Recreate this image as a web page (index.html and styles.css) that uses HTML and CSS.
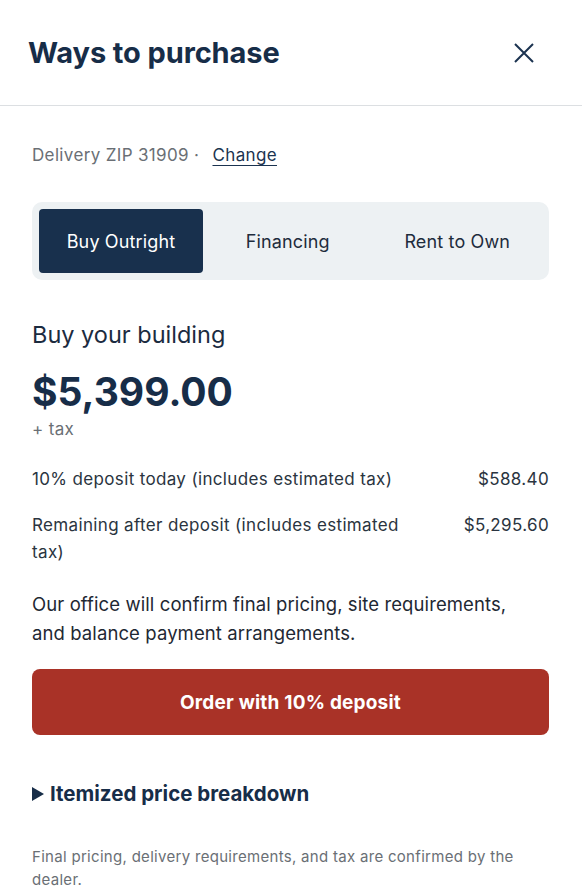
FILE: index.html
```html
<!DOCTYPE html>
<html lang="en">

<head>
    <meta charset="UTF-8">
    <meta name="viewport" content="width=device-width, initial-scale=1.0">
    <title>Ways to purchase</title>
    <link rel="stylesheet" href="styles.css">
</head>

<body>
    <div class="panel">
        <header class="panelHead">
            <h1>Ways to purchase</h1>
            <button class="closeBtn" type="button" aria-label="Close">
                <svg width="22" height="22" viewBox="0 0 22 22">
                    <path d="M2 2 L20 20 M20 2 L2 20" stroke="#1b3350" stroke-width="2" fill="none" />
                </svg>
            </button>
        </header>

        <main class="panelBody">
            <p class="zip">Delivery ZIP 31909 · <a href="#">Change</a></p>

            <ul class="tabs">
                <li class="active">Buy Outright</li>
                <li>Financing</li>
                <li>Rent to Own</li>
            </ul>

            <h2 class="subTitle">Buy your building</h2>
            <div class="price">$5,399.00</div>
            <div class="tax">+ tax</div>

            <div class="row">
                <span>10% deposit today (includes estimated tax)</span>
                <span>$588.40</span>
            </div>
            <div class="row">
                <span>Remaining after deposit (includes estimated tax)</span>
                <span>$5,295.60</span>
            </div>

            <p class="note">Our office will confirm final pricing, site requirements, and balance payment arrangements.</p>

            <button class="orderBtn" type="button">Order with 10% deposit</button>

            <details class="breakdown">
                <summary>Itemized price breakdown</summary>
            </details>

            <p class="fine">Final pricing, delivery requirements, and tax are confirmed by the dealer.</p>
        </main>
    </div>
</body>

</html>
```

FILE: styles.css
```css
* {
    padding: 0;
    margin: 0;
    box-sizing: border-box;
    list-style: none;
}

body {
    font-family: Inter, "Liberation Sans", sans-serif;
    color: #1b2b3f;
    background: #fff;
}

.panelHead {
    height: 106px;
    display: flex;
    align-items: center;
    justify-content: space-between;
    padding: 0 47px 0 28px;
    border-bottom: 1px solid #dcdfe2;
}

.panelHead h1 {
    font-size: 29px;
    font-weight: 700;
    color: #172d48;
    letter-spacing: -0.1px;
}

.closeBtn {
    border: none;
    background: none;
    width: 22px;
    height: 22px;
    cursor: pointer;
}

.panelBody {
    padding: 38px 33px 0 32px;
}

.zip {
    font-size: 17px;
    letter-spacing: 0.35px;
    color: #6a6f75;
    line-height: 22px;
}

.zip a {
    color: #1b3350;
    margin-left: 8px;
    text-underline-offset: 4px;
}

.tabs {
    margin-top: 36px;
    display: grid;
    grid-template-columns: 164px 1fr 1fr;
    padding: 7px;
    background: #edf1f3;
    border-radius: 10px;
}

.tabs li {
    height: 64px;
    display: flex;
    align-items: center;
    justify-content: center;
    font-size: 18px;
    letter-spacing: 0.15px;
    color: #1e2c3c;
    border-radius: 4px;
}

.tabs li.active {
    background: #18304d;
    color: #fff;
}

.subTitle {
    margin-top: 40px;
    font-size: 23.5px;
    font-weight: 400;
    color: #1b2b3f;
    line-height: 30px;
}

.price {
    margin-top: 19px;
    font-size: 39px;
    font-weight: 700;
    color: #172d48;
    line-height: 46px;
}

.tax {
    margin-top: 2px;
    font-size: 17px;
    letter-spacing: 0.35px;
    color: #6a6f75;
    line-height: 24px;
}

.row {
    display: flex;
    justify-content: space-between;
    gap: 48px;
    font-size: 17px;
    letter-spacing: 0.35px;
    line-height: 27px;
    color: #2a3440;
    margin-top: 25px;
}

.row + .row {
    margin-top: 19px;
}

.note {
    margin-top: 24px;
    font-size: 18.5px;
    letter-spacing: 0.1px;
    line-height: 29px;
    color: #1e2833;
    padding-right: 20px;
}

.orderBtn {
    display: block;
    width: 100%;
    height: 66px;
    margin-top: 21px;
    border: none;
    border-radius: 8px;
    background: #a93227;
    color: #fff;
    font-family: inherit;
    font-size: 19px;
    letter-spacing: 0.2px;
    font-weight: 700;
    cursor: pointer;
}

.breakdown {
    margin-top: 45px;
}

.breakdown summary {
    display: flex;
    align-items: center;
    gap: 6px;
    font-size: 20.5px;
    font-weight: 700;
    color: #172d48;
    cursor: pointer;
    line-height: 28px;
}

.breakdown summary::before {
    content: "";
    border-left: 12px solid #172d48;
    border-top: 7px solid transparent;
    border-bottom: 7px solid transparent;
}

.fine {
    margin-top: 37px;
    font-size: 15px;
    letter-spacing: 0.3px;
    line-height: 23px;
    color: #6a6f75;
    padding-right: 30px;
}
```
